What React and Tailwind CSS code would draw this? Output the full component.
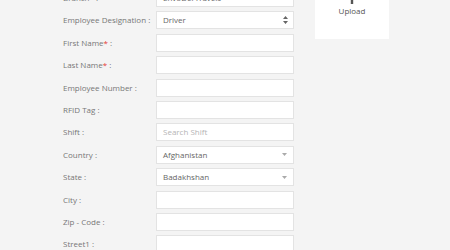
import React from 'react';

const rows = [
    { label: 'Branch', req: true, kind: 'text', value: 'EnvoDerTravels' },
    { label: 'Employee Designation', kind: 'native', value: 'Driver' },
    { label: 'First Name', req: true, kind: 'text' },
    { label: 'Last Name', req: true, kind: 'text' },
    { label: 'Employee Number', kind: 'text' },
    { label: 'RFID Tag', kind: 'text' },
    { label: 'Shift', kind: 'text', placeholder: 'Search Shift' },
    { label: 'Country', kind: 'select', value: 'Afghanistan' },
    { label: 'State', kind: 'select', value: 'Badakhshan' },
    { label: 'City', kind: 'text' },
    { label: 'Zip - Code', kind: 'text' },
    { label: 'Street1', kind: 'text' },
];

function Field({ row }) {
    if (row.kind === 'native') {
        return (
            <div className="flex items-center justify-between h-[18px] w-[138px] bg-white border border-[#e3e3e3] pl-[6px] pr-[5px] text-[#666]">
                <span>{row.value}</span>
                <svg width="5" height="8" viewBox="0 0 5 8">
                    <path d="M2.5 0 L5 3 L0 3 Z M0 5 L5 5 L2.5 8 Z" fill="#666" />
                </svg>
            </div>
        );
    }
    if (row.kind === 'select') {
        return (
            <div className="flex items-center justify-between h-[18px] w-[138px] bg-white border border-[#e3e3e3] pl-[6px] pr-[6px] text-[#666]">
                <span>{row.value}</span>
                <svg width="5" height="3" viewBox="0 0 5 3">
                    <path d="M0 0 L5 0 L2.5 3 Z" fill="#aaa" />
                </svg>
            </div>
        );
    }
    return (
        <div className="flex items-center h-[18px] w-[138px] bg-white border border-[#e3e3e3] pl-[6px] text-[#666]">
            {row.placeholder ? <span className="text-[#b5b5b5]">{row.placeholder}</span> : <span>{row.value}</span>}
        </div>
    );
}

export default function App() {
    return (
        <div
            className="w-[450px] h-[250px] overflow-hidden bg-[#f4f4f4] text-[8px]"
            style={{ fontFamily: '"Open Sans", "Liberation Sans", sans-serif' }}
        >
            <div className="flex items-start -mt-[11px]">
                {/* Form rows */}
                <div className="flex flex-col gap-[4.4px] pl-[63px]">
                    {rows.map((row) => (
                        <div key={row.label} className="flex items-center">
                            <div className="w-[93px] text-[#777]">
                                {row.label}
                                {row.req && <span className="text-[#e53935]">*</span>} :
                            </div>
                            <Field row={row} />
                        </div>
                    ))}
                </div>

                {/* Photo upload box */}
                <div className="ml-[21px] -mt-[9px] w-[74px] h-[59px] bg-white flex flex-col items-center justify-end pb-[22px] text-[#555]">
                    <svg width="10" height="14" viewBox="0 0 10 14" className="mb-[1px]">
                        <path d="M5 0 L9.5 5 L6.2 5 L6.2 14 L3.8 14 L3.8 5 L0.5 5 Z" fill="#555" />
                    </svg>
                    <span>Upload</span>
                </div>
            </div>
        </div>
    );
}
